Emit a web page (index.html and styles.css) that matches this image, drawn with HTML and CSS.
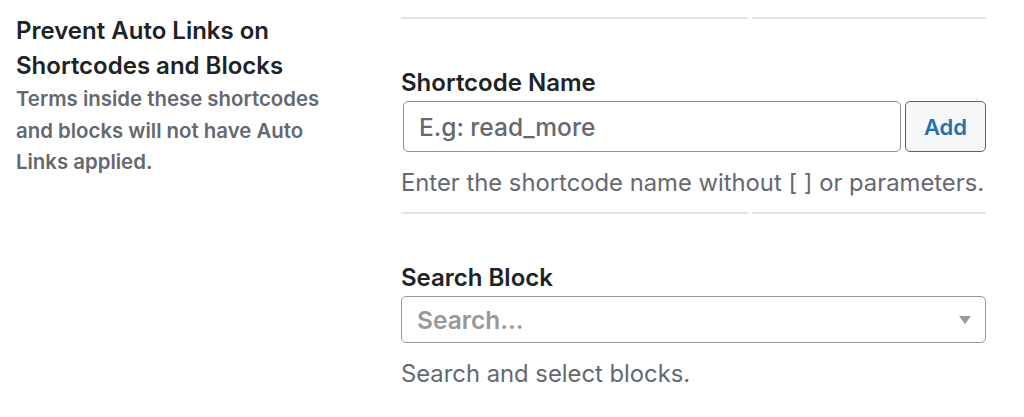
FILE: index.html
```html
<!DOCTYPE html>
<html lang="en">
<head>
    <meta charset="UTF-8">
    <title>Prevent Auto Links</title>
    <link rel="stylesheet" href="styles.css">
</head>
<body>
    <div class="row">
        <div class="side">
            <h2>Prevent Auto Links on Shortcodes and Blocks</h2>
            <p class="desc">Terms inside these shortcodes and blocks will not have Auto Links applied.</p>
        </div>

        <div class="main">
            <div class="divider"><span class="seg-a"></span><span class="seg-b"></span></div>

            <div class="field">
                <label class="label">Shortcode Name</label>
                <div class="input-row">
                    <input type="text" class="input" placeholder="E.g: read_more">
                    <button class="btn">Add</button>
                </div>
                <p class="help">Enter the shortcode name without [ ] or parameters.</p>
            </div>

            <div class="divider"><span class="seg-a"></span><span class="seg-b"></span></div>

            <div class="field">
                <label class="label">Search Block</label>
                <div class="select">
                    <span class="select-ph">Search...</span>
                    <span class="caret"></span>
                </div>
                <p class="help">Search and select blocks.</p>
            </div>
        </div>
    </div>
</body>
</html>
```

FILE: styles.css
```css
body {
    margin: 0;
    font-family: Inter, 'Noto Sans', sans-serif;
    color: #1d2327;
    background-color: #fff;
}
.row {
    display: flex;
    padding-left: 16px;
}
.side {
    width: 332px;
    padding-top: 13px;
}
.side h2 {
    margin: 0;
    font-size: 24px;
    font-weight: 600;
    line-height: 35px;
}
.desc {
    margin: 0;
    font-size: 20.4px;
    font-weight: 600;
    line-height: 31.5px;
    color: #646970;
}
.main {
    width: 585px;
    margin-left: 53px;
    padding-top: 17px;
}
.divider {
    display: flex;
    gap: 4px;
    height: 2px;
}
.seg-a {
    width: 347px;
    background-color: #e2e2e4;
}
.seg-b {
    flex: 1;
    background-color: #e2e2e4;
}
.field {
    padding: 50px 0 15px;
}
.label {
    display: block;
    font-size: 24px;
    font-weight: 600;
    line-height: 28px;
    margin-bottom: 4px;
}
.input-row {
    display: flex;
    gap: 4px;
    padding-left: 2px;
}
.input {
    flex: 1;
    height: 51px;
    box-sizing: border-box;
    border: 1px solid #8c8f94;
    border-radius: 5px;
    padding: 0 15px;
    font-family: inherit;
    font-size: 24.5px;
    font-weight: 500;
    color: #2c3338;
}
.input::placeholder {
    color: #646970;
}
.btn {
    width: 81px;
    height: 51px;
    box-sizing: border-box;
    border: 1px solid #2271b1;
    border-radius: 5px;
    background-color: #f6f7f7;
    color: #2271b1;
    font-family: inherit;
    font-size: 22px;
    font-weight: 600;
}
.help {
    margin: 17px 0 0;
    font-size: 23.8px;
    line-height: 28px;
    white-space: nowrap;
    color: #646970;
}
.select {
    display: flex;
    align-items: center;
    justify-content: space-between;
    height: 47px;
    box-sizing: border-box;
    border: 1px solid #999;
    border-radius: 5px;
    padding: 0 14px 0 15px;
}
.select-ph {
    font-size: 24.5px;
    font-weight: 600;
    color: #999;
}
.caret {
    width: 0;
    height: 0;
    border-left: 6px solid transparent;
    border-right: 6px solid transparent;
    border-top: 8px solid #999;
}
```
